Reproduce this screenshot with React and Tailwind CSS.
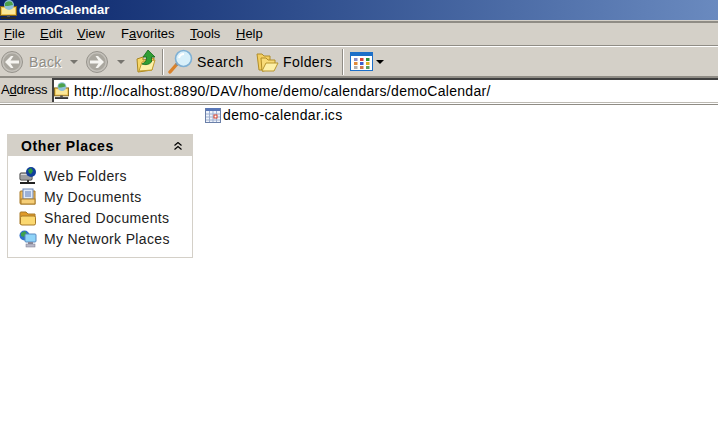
import React from "react";

const font = "font-['Liberation_Sans',sans-serif]";

function WebIcon({ className }) {
  return (
    <svg viewBox="0 0 17 20" className={className}>
      <rect x="0.5" y="6.5" width="16" height="9" fill="#f0c24e" stroke="#7d6218" />
      <rect x="2" y="8" width="13" height="6" fill="#fbe89a" />
      <circle cx="9" cy="5" r="5" fill="#8fc0d8" />
      <path d="M5 3 Q8 0 12 2 L13 5 L8 6 L5 6Z" fill="#4da24a" />
      <rect x="7" y="15" width="3" height="2" fill="#555" />
      <rect x="1" y="17" width="15" height="2" fill="#2a2a2a" />
    </svg>
  );
}

function BackIcon({ flip }) {
  return (
    <svg viewBox="0 0 22 22" className={`w-[22px] h-[22px] ${flip ? "-scale-x-100" : ""}`}>
      <circle cx="11" cy="11" r="10.5" fill="#c4c1ba" stroke="#96938c" />
      <circle cx="11" cy="11" r="8.5" fill="#aaa79f" />
      <path d="M4 11 L10 5 H12.5 L9.5 9.5 H18 V12.5 H9.5 L12.5 17 H10Z" fill="#f6f5f1" />
    </svg>
  );
}

function Caret({ dark }) {
  return (
    <svg viewBox="0 0 8 4" className="w-2 h-1">
      <path d="M0 0 H8 L4 4Z" fill={dark ? "#000" : "#77756f"} />
    </svg>
  );
}

function UpIcon() {
  return (
    <svg viewBox="0 0 20 23" className="w-5 h-[23px]">
      <path d="M1 9 L7 7 V10 L18 8 L16 20 L2 22Z" fill="#f7d768" stroke="#a9861f" />
      <path d="M3 21 L6 12 L19 10 L16 20Z" fill="#fdf0a8" stroke="#c09c30" />
      <path d="M12 0 L19 7 H15.5 V12 Q12 16 6 14 Q11 12 10.5 7 H7Z" fill="#2f9e34" stroke="#146a1c" strokeWidth="0.8" />
    </svg>
  );
}

function SearchIcon() {
  return (
    <svg viewBox="0 0 25 25" className="w-[25px] h-[25px]">
      <path d="M2 23 L9 15" stroke="#d9822b" strokeWidth="3.4" strokeLinecap="round" />
      <path d="M8 16 L10 14" stroke="#8a8a8a" strokeWidth="3" />
      <circle cx="15.5" cy="9.5" r="8" fill="#d8f0fa" stroke="#7fb0d4" strokeWidth="1.6" />
      <path d="M11 9 Q12 5 16 5" stroke="#fff" strokeWidth="2" fill="none" />
    </svg>
  );
}

function FoldersIcon() {
  return (
    <svg viewBox="0 0 23 21" className="w-[23px] h-[21px]">
      <path d="M1 3 H6 L8 5 H14 V10 L5 19 H3Z" fill="#f4cf62" stroke="#b08d28" />
      <path d="M5 7 H10 L12 9 H19 V12 L8 20 H6Z" fill="#f8db78" stroke="#b08d28" />
      <path d="M6 20 L10 12 H22 L18 20Z" fill="#fdf0a8" stroke="#b8962e" />
    </svg>
  );
}

function ViewsIcon() {
  const colors = ["#8a8fc8", "#d8443a", "#2f8f3a", "#e08a3a", "#3a5fd0", "#e0b020", "#b0b0b0", "#d07a50", "#60a060"];
  return (
    <svg viewBox="0 0 23 19" className="w-[23px] h-[19px]">
      <rect x="0.5" y="0.5" width="22" height="18" fill="#fff" stroke="#1c6fc8" />
      <rect x="1" y="1" width="21" height="3" fill="#1c6fc8" />
      {colors.map((c, i) => (
        <rect key={i} x={4 + (i % 3) * 6} y={6 + Math.floor(i / 3) * 4} width="3.5" height="3" fill={c} />
      ))}
    </svg>
  );
}

function CalendarIcon() {
  return (
    <svg viewBox="0 0 16 16" className="w-4 h-4">
      <rect x="0.5" y="1.5" width="15" height="14" fill="#eef3fb" stroke="#6a7fa8" />
      <rect x="1" y="1" width="14" height="3" fill="#5a78b8" />
      <path d="M1 7 H15 M1 10 H15 M1 13 H15 M4.5 4 V15 M8 4 V15 M11.5 4 V15" stroke="#9fb0d0" />
      <rect x="9" y="8" width="3" height="3" fill="#fff" stroke="#d8402a" />
    </svg>
  );
}

function NetServerIcon() {
  return (
    <svg viewBox="0 0 18 18" className="w-[18px] h-[18px]">
      <rect x="1" y="6" width="12" height="7" rx="1" fill="#d8d8d8" stroke="#333" />
      <path d="M2 9 H12 M2 11 H12" stroke="#666" />
      <circle cx="12" cy="5" r="5" fill="#123f9a" />
      <path d="M9 3 L12 1 L14 4 L12 7 L10 6Z" fill="#2c9a3a" />
      <rect x="8" y="13" width="2" height="3" fill="#333" />
      <rect x="1" y="15" width="15" height="2" fill="#222" />
    </svg>
  );
}

function DocsIcon() {
  return (
    <svg viewBox="0 0 18 18" className="w-[18px] h-[18px]">
      <path d="M1 4 Q1 3 2 3 H16 V16 H2 Q1 16 1 15Z" fill="#efb95a" stroke="#a87a28" />
      <rect x="4" y="1" width="10" height="10" fill="#dfe9f8" stroke="#6a86b8" />
      <path d="M6 4 H12 M6 6 H12 M6 8 H12" stroke="#5a7ab8" />
      <rect x="2" y="11" width="14" height="5" fill="#f6cf78" stroke="#a87a28" />
    </svg>
  );
}

function FolderIcon() {
  return (
    <svg viewBox="0 0 18 18" className="w-[18px] h-[18px]">
      <path d="M1 4 Q1 3 2 3 H7 L9 5 H16 V15 H1Z" fill="#e09a28" stroke="#a87a28" />
      <rect x="1.5" y="7" width="15" height="9" rx="1.5" fill="#fbd870" stroke="#a87a28" />
    </svg>
  );
}

function NetworkIcon() {
  return (
    <svg viewBox="0 0 18 18" className="w-[18px] h-[18px]">
      <circle cx="5.5" cy="5.5" r="5" fill="#2f6fc8" />
      <path d="M2 3 L6 1 L8 4 L5 7 L2 6Z" fill="#3da24a" />
      <rect x="6" y="4" width="11" height="8" rx="1" fill="#8fd4f8" stroke="#5a8ac0" />
      <rect x="9" y="12" width="5" height="2" fill="#8a8a9a" />
      <rect x="7" y="14" width="9" height="3" fill="#b8b8c8" stroke="#77778a" strokeWidth="0.5" />
    </svg>
  );
}

const places = [
  { icon: NetServerIcon, label: "Web Folders" },
  { icon: DocsIcon, label: "My Documents" },
  { icon: FolderIcon, label: "Shared Documents" },
  { icon: NetworkIcon, label: "My Network Places" },
];

function Sep() {
  return <div className="w-0.5 h-[26px] bg-[#8f8c85] border-r border-white" />;
}

export default function App() {
  return (
    <div className={`w-[718px] h-[426px] overflow-hidden bg-white text-black text-sm ${font}`}>
      {/* title bar */}
      <div className="flex items-center h-5 bg-gradient-to-r from-[#0a246a] to-[#6a8abf]">
        <WebIcon className="w-[17px] h-5 shrink-0" />
        <span className="ml-0.5 text-[13px] font-bold text-white">demoCalendar</span>
      </div>
      <div className="h-[3px] bg-[#d4d0c8] border-b-2 border-[#8f8c85]" />

      {/* menu */}
      <div className="flex items-center h-[22px] bg-[#d4d0c8] text-[13px]">
        <span className="ml-1 w-9"><u>F</u>ile</span>
        <span className="w-[37px]"><u>E</u>dit</span>
        <span className="w-11"><u>V</u>iew</span>
        <span className="w-[69px]">F<u>a</u>vorites</span>
        <span className="w-[46px]"><u>T</u>ools</span>
        <span><u>H</u>elp</span>
      </div>
      <div className="h-0.5 bg-white border-t border-[#8f8c85]" />

      {/* toolbar */}
      <div className="flex items-center h-[31px] pl-px bg-[#d4d0c8] border-b-2 border-[#8f8c85]">
        <BackIcon />
        <span className="ml-1.5 w-[41px] text-[#8f8c85] tracking-[0.4px] [text-shadow:1px_1px_0_#fff]">Back</span>
        <Caret />
        <div className="w-2" />
        <BackIcon flip />
        <div className="w-[9px]" />
        <Caret />
        <div className="w-[11px]" />
        <UpIcon />
        <div className="w-1.5" />
        <Sep />
        <div className="w-1" />
        <SearchIcon />
        <span className="ml-1 w-[59px] tracking-[0.4px]">Search</span>
        <FoldersIcon />
        <span className="ml-1 w-[59px] tracking-[0.4px]">Folders</span>
        <Sep />
        <div className="w-1.5" />
        <ViewsIcon />
        <div className="w-[3px]" />
        <Caret dark />
      </div>

      {/* address */}
      <div className="flex items-stretch h-[25px] bg-[#d4d0c8] border-b border-[#bdbab3]">
        <span className="flex items-center w-[52px] pl-px text-[13px] tracking-[-0.2px]">A<u>d</u>dress</span>
        <div className="flex flex-1 items-center bg-white border-t-2 border-l-2 border-[#404040]">
          <WebIcon className="w-[15px] h-[18px] shrink-0" />
          <span className="ml-[5px] tracking-[0.3px]">http://localhost:8890/DAV/home/demo/calendars/demoCalendar/</span>
        </div>
      </div>
      <div className="h-0.5 bg-white border-b border-[#8f8c85]" />

      {/* file */}
      <div className="flex items-center h-[18px] mt-px pl-[205px]">
        <CalendarIcon />
        <span className="ml-0.5 tracking-[0.35px]">demo-calendar.ics</span>
      </div>

      {/* other places */}
      <div className="w-[186px] ml-[7px] mt-[10px] border border-[#d4d0c8]">
        <div className="flex items-center justify-between h-[21px] pl-[13px] pr-[10px] bg-[#d4d0c8]">
          <span className="font-bold tracking-[0.6px]">Other Places</span>
          <svg viewBox="0 0 8 8" className="w-2 h-2">
            <path d="M0.5 3.5 L4 0.5 L7.5 3.5 M0.5 7.5 L4 4.5 L7.5 7.5" fill="none" stroke="#000" strokeWidth="1.2" />
          </svg>
        </div>
        <div className="flex flex-col pt-[9px] pb-2 pl-[11px]">
          {places.map(({ icon: Icon, label }) => (
            <div key={label} className="flex items-center h-[21px]">
              <Icon />
              <span className="ml-[7px] text-[#222] tracking-[0.35px]">{label}</span>
            </div>
          ))}
        </div>
      </div>
    </div>
  );
}
